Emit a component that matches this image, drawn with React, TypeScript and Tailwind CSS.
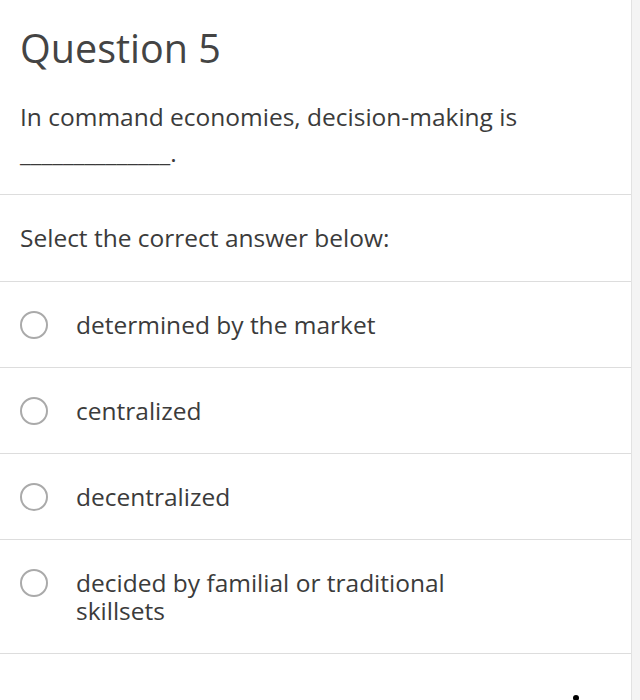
import React from "react";

const options = [
  "determined by the market",
  "centralized",
  "decentralized",
  "decided by familial or traditional skillsets",
];

const Radio = () => (
  <span className="h-[28px] w-[28px] shrink-0 rounded-full border-[2.5px] border-[#aaaaaa] bg-white" />
);

export default function App() {
  return (
    <div
      className="flex min-h-[700px] w-[640px] bg-[#f4f4f4] text-[#3b3b3b]"
      style={{ fontFamily: '"Open Sans", "Liberation Sans", sans-serif' }}
    >
      <div className="w-[632px] border-r border-[#e2e2e2] bg-white">
        <div className="border-b border-[#dddddd] px-5 pt-[25px] pb-[23px]">
          <h1 className="text-[39.5px] font-normal leading-[46px] text-[#444444]">Question 5</h1>
          <p className="mt-[28px] text-[24.5px] leading-[36px]">
            In command economies, decision-making is
            <br />
            ______________.
          </p>
        </div>
        <div className="border-b border-[#dddddd] px-5 py-[27px] text-[24.5px] leading-[32px]">
          Select the correct answer below:
        </div>
        {options.map((o) => (
          <div
            key={o}
            className="flex items-start gap-[28px] border-b border-[#dddddd] px-5 py-[28.5px] text-[24.5px] leading-[28px]"
          >
            <Radio />
            <span className="max-w-[400px]">{o}</span>
          </div>
        ))}
        <div className="flex justify-end pt-[41px] pr-[52px]">
          <span className="h-[6px] w-[6px] rounded-full bg-black" />
        </div>
      </div>
    </div>
  );
}
